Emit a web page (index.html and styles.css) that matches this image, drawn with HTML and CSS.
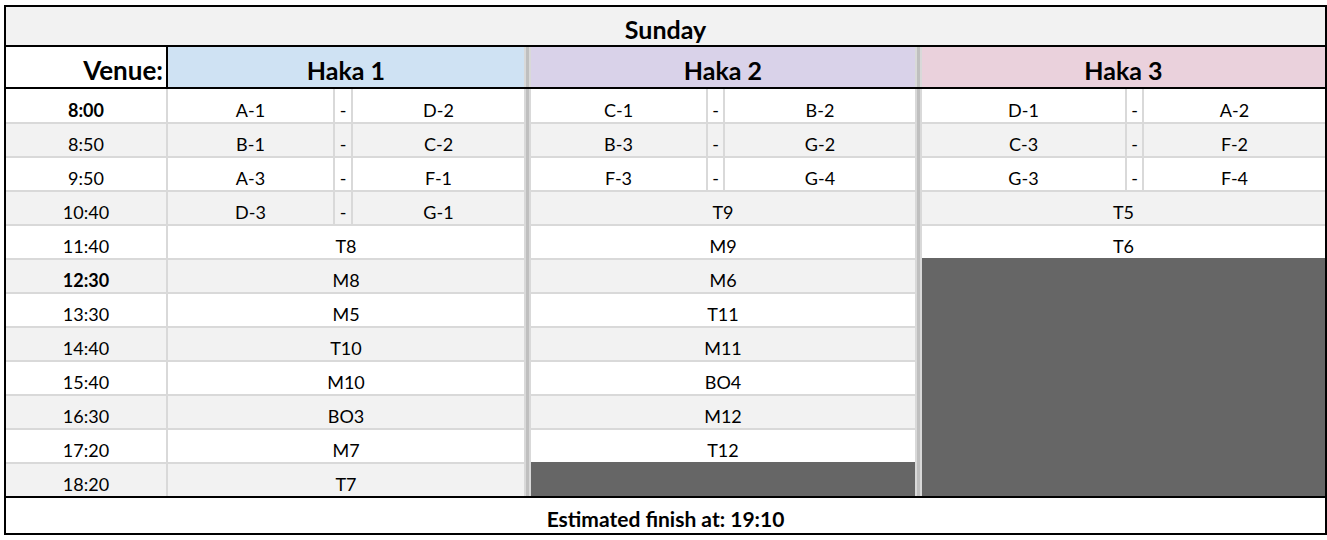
FILE: index.html
```html
<!DOCTYPE html>
<html>
<head>
<meta charset="utf-8">
<title>Sunday schedule</title>
<link rel="stylesheet" href="styles.css">
</head>
<body>
<div class="sheet">
  <div class="title">Sunday</div>
  <div class="venues">
    <div class="venue-label">Venue:</div>
    <div class="venue h1">Haka 1</div>
    <div class="sep"></div>
    <div class="venue h2">Haka 2</div>
    <div class="sep"></div>
    <div class="venue h3">Haka 3</div>
  </div>
  <div class="grid">
    <div class="sep sep-a"></div>
    <div class="sep sep-b"></div>

    <!-- row 1 -->
    <div class="c time bold r1">8:00</div>
    <div class="c r1">A-1</div><div class="c r1">-</div><div class="c r1">D-2</div>
    <div class="c r1 c5">C-1</div><div class="c r1">-</div><div class="c r1">B-2</div>
    <div class="c r1 c9">D-1</div><div class="c r1">-</div><div class="c r1">A-2</div>

    <!-- row 2 -->
    <div class="c g time">8:50</div>
    <div class="c g">B-1</div><div class="c g">-</div><div class="c g">C-2</div>
    <div class="c g c5">B-3</div><div class="c g">-</div><div class="c g">G-2</div>
    <div class="c g c9">C-3</div><div class="c g">-</div><div class="c g">F-2</div>

    <!-- row 3 -->
    <div class="c time">9:50</div>
    <div class="c">A-3</div><div class="c">-</div><div class="c">F-1</div>
    <div class="c c5">F-3</div><div class="c">-</div><div class="c">G-4</div>
    <div class="c c9">G-3</div><div class="c">-</div><div class="c">F-4</div>

    <!-- row 4 -->
    <div class="c g time">10:40</div>
    <div class="c g">D-3</div><div class="c g">-</div><div class="c g">G-1</div>
    <div class="c g span2">T9</div>
    <div class="c g span3">T5</div>

    <!-- row 5 -->
    <div class="c time">11:40</div>
    <div class="c span1">T8</div>
    <div class="c span2">M9</div>
    <div class="c span3">T6</div>

    <!-- row 6 -->
    <div class="c g time bold">12:30</div>
    <div class="c g span1">M8</div>
    <div class="c g span2">M6</div>
    <div class="dark dark3"></div>

    <!-- row 7 -->
    <div class="c time">13:30</div>
    <div class="c span1">M5</div>
    <div class="c span2">T11</div>

    <!-- row 8 -->
    <div class="c g time">14:40</div>
    <div class="c g span1">T10</div>
    <div class="c g span2">M11</div>

    <!-- row 9 -->
    <div class="c time">15:40</div>
    <div class="c span1">M10</div>
    <div class="c span2">BO4</div>

    <!-- row 10 -->
    <div class="c g time">16:30</div>
    <div class="c g span1">BO3</div>
    <div class="c g span2">M12</div>

    <!-- row 11 -->
    <div class="c time">17:20</div>
    <div class="c span1">M7</div>
    <div class="c span2">T12</div>

    <!-- row 12 -->
    <div class="c g time">18:20</div>
    <div class="c g span1">T7</div>
    <div class="dark dark2"></div>
  </div>
  <div class="footer">Estimated finish at: 19:10</div>
</div>
</body>
</html>
```

FILE: styles.css
```css
html, body {
  margin: 0;
  padding: 0;
  background: #ffffff;
}

body {
  padding: 5px 0 0 4px;
  font-family: Lato, "Liberation Sans", sans-serif;
  color: #000;
}

.sheet {
  width: 1319px;
  border: 2px solid #000;
}

.title {
  height: 40px;
  box-sizing: border-box;
  padding-top: 6px;
  background: #f2f2f2;
  border-bottom: 2px solid #000;
  display: flex;
  align-items: center;
  justify-content: center;
  font-weight: 700;
  font-size: 25px;
}

.venues {
  display: grid;
  grid-template-columns: 162px 356px 7px 384px 7px 403px;
  height: 40px;
  border-bottom: 2px solid #000;
}

.venue-label {
  border-right: 2px solid #000;
  display: flex;
  align-items: center;
  justify-content: flex-end;
  padding: 6px 3px 0 0;
  font-weight: 700;
  font-size: 26px;
}

.venue {
  display: flex;
  align-items: center;
  justify-content: center;
  padding-top: 6px;
  font-weight: 700;
  font-size: 25px;
}

.h1 { background: #cfe2f3; }
.h2 { background: #d9d2e9; }
.h3 { background: #ead1dc; }

.sep {
  background: linear-gradient(to right, #d9d9d9 0 2px, #bfbfbf 2px 5px, #d9d9d9 5px 7px);
}

.grid {
  display: grid;
  grid-template-columns: 160px 165px 16px 171px 3px 175px 15px 190px 3px 203px 15px 181px;
  grid-template-rows: 33px repeat(11, 32px);
  column-gap: 2px;
  row-gap: 2px;
  background: #d9d9d9;
  border-bottom: 2px solid #000;
}

.grid .sep {
  background: #bfbfbf;
  grid-row: 1 / -1;
}

.sep-a { grid-column: 5; }
.sep-b { grid-column: 9; }

.c {
  background: #ffffff;
  display: flex;
  align-items: center;
  justify-content: center;
  padding-top: 8px;
  box-sizing: border-box;
  font-size: 18px;
  white-space: nowrap;
}

.c.g { background: #f2f2f2; }
.r1 { padding-top: 9px; }

.time { grid-column: 1; }
.bold { font-weight: 700; }

.c5 { grid-column: 6; }
.c9 { grid-column: 10; }

.span1 { grid-column: 2 / 5; }
.span2 { grid-column: 6 / 9; }
.span3 { grid-column: 10 / 13; }

.dark {
  background: #666666;
  margin-top: -2px;
}

.dark3 {
  grid-column: 10 / 13;
  grid-row: 6 / 13;
}

.dark2 {
  grid-column: 6 / 9;
  grid-row: 12;
}

.footer {
  height: 35px;
  box-sizing: border-box;
  padding-top: 6px;
  display: flex;
  align-items: center;
  justify-content: center;
  font-weight: 700;
  font-size: 21px;
}
```
